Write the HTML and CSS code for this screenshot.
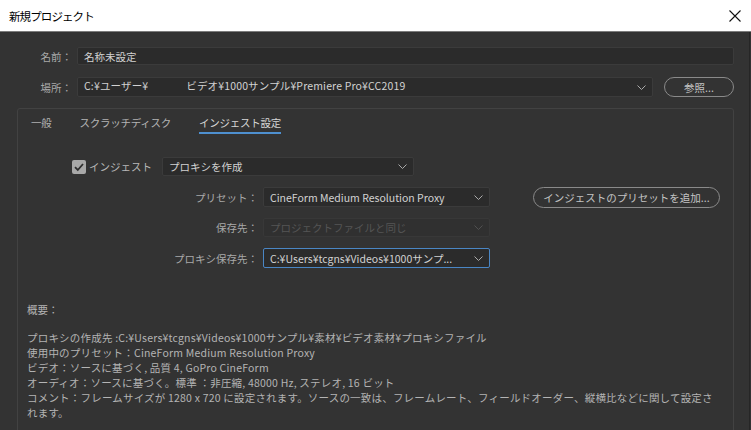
FILE: index.html
```html
<!DOCTYPE html>
<html lang="ja">
<head>
<meta charset="utf-8">
<title>新規プロジェクト</title>
<link rel="stylesheet" href="styles.css">
</head>
<body>
<div class="window">
  <div class="titlebar">
    <span class="title">新規プロジェクト</span>
    <svg class="close" width="12" height="12" viewBox="0 0 12 12"><path d="M0.5 0.5 L11.5 11.5 M11.5 0.5 L0.5 11.5" stroke="#111" stroke-width="1.1" fill="none"/></svg>
  </div>
  <div class="body">
    <div class="form-row row-name">
      <span class="label">名前：</span>
      <div class="field field-name">名称未設定</div>
    </div>
    <div class="form-row row-loc">
      <span class="label">場所：</span>
      <div class="field field-loc">
        <span class="val">C:¥ユーザー¥<span class="redact"></span>ビデオ¥1000サンプル¥Premiere Pro¥CC2019</span>
        <svg class="chev" width="9" height="5" viewBox="0 0 9 5"><path d="M0.5 0.5 L4.5 4.5 L8.5 0.5" stroke="#aaa" stroke-width="1" fill="none"/></svg>
      </div>
      <div class="pill btn-browse">参照...</div>
    </div>
    <div class="panel">
      <div class="tabs">
        <span class="tab">一般</span>
        <span class="tab">スクラッチディスク</span>
        <span class="tab active">インジェスト設定</span>
      </div>
      <div class="ingest-row">
        <span class="checkbox"><svg width="14" height="14" viewBox="0 0 14 14"><path d="M3 7.2 L5.8 10 L11 4" stroke="#2e2e2e" stroke-width="1.8" fill="none"/></svg></span>
        <span class="ingest-label">インジェスト</span>
        <div class="field field-ingest">
          <span class="val">プロキシを作成</span>
          <svg class="chev" width="9" height="5" viewBox="0 0 9 5"><path d="M0.5 0.5 L4.5 4.5 L8.5 0.5" stroke="#aaa" stroke-width="1" fill="none"/></svg>
        </div>
      </div>
      <div class="settings">
        <div class="set-row r1">
          <span class="set-label">プリセット：</span>
          <div class="field field-set">
            <span class="val">CineForm Medium Resolution Proxy</span>
            <svg class="chev" width="9" height="5" viewBox="0 0 9 5"><path d="M0.5 0.5 L4.5 4.5 L8.5 0.5" stroke="#aaa" stroke-width="1" fill="none"/></svg>
          </div>
          <div class="pill btn-add">インジェストのプリセットを追加...</div>
        </div>
        <div class="set-row r2">
          <span class="set-label">保存先：</span>
          <div class="field field-set disabled">
            <span class="val">プロジェクトファイルと同じ</span>
            <svg class="chev" width="9" height="5" viewBox="0 0 9 5"><path d="M0.5 0.5 L4.5 4.5 L8.5 0.5" stroke="#505050" stroke-width="1" fill="none"/></svg>
          </div>
        </div>
        <div class="set-row r3">
          <span class="set-label">プロキシ保存先：</span>
          <div class="field field-set focused">
            <span class="val">C:¥Users¥tcgns¥Videos¥1000サンプ...</span>
            <svg class="chev" width="9" height="5" viewBox="0 0 9 5"><path d="M0.5 0.5 L4.5 4.5 L8.5 0.5" stroke="#aaa" stroke-width="1" fill="none"/></svg>
          </div>
        </div>
      </div>
      <div class="summary">
        <p class="sum-title">概要：</p>
        <p class="sum-text">プロキシの作成先 :C:¥Users¥tcgns¥Videos¥1000サンプル¥素材¥ビデオ素材¥プロキシファイル<br>使用中のプリセット：CineForm Medium Resolution Proxy<br>ビデオ：ソースに基づく, 品質 4, GoPro CineForm<br>オーディオ：ソースに基づく。標準 ：非圧縮, 48000 Hz, ステレオ, 16 ビット<br>コメント：フレームサイズが 1280 x 720 に設定されます。ソースの一致は、フレームレート、フィールドオーダー、縦横比などに関して設定されます。</p>
      </div>
    </div>
  </div>
</div>
</body>
</html>
```
FILE: styles.css
```css
* { box-sizing: border-box; }
html, body { margin: 0; padding: 0; }
body {
  width: 751px;
  height: 430px;
  overflow: hidden;
  background: #333333;
  font-family: "Noto Sans CJK JP", "Noto Sans", sans-serif;
}
.window {
  width: 751px;
  height: 430px;
  display: flex;
  flex-direction: column;
}
.titlebar {
  height: 32px;
  flex: none;
  background: #ffffff;
  border-bottom: 1px solid #7c7c7c;
  display: flex;
  align-items: center;
  justify-content: space-between;
  padding: 0 10px 0 9px;
}
.title {
  font-size: 11.5px;
  color: #000;
  letter-spacing: -0.9px;
}
.close { display: block; }
.body {
  flex: 1;
  background: #333333;
  border-right: 1px solid #262626;
  width: 750px;
  padding-top: 15px;
  overflow: hidden;
}
.form-row {
  display: flex;
  align-items: center;
}
.row-name { height: 18px; }
.row-loc { height: 20px; margin-top: 12px; }
.label {
  width: 77px;
  padding-right: 5px;
  text-align: right;
  font-size: 10.5px;
  color: #a9a9a9;
  flex: none;
}
.field {
  background: #2b2b2b;
  border: 1px solid #3b3b3b;
  border-radius: 2px;
  color: #d2d2d2;
  font-size: 10.5px;
  display: flex;
  align-items: center;
  justify-content: space-between;
  padding: 0 6px 0 6px;
  height: 100%;
  white-space: nowrap;
}
.field-name { width: 657px; }
.field-loc { width: 576px; padding-right: 6px; }
.field-loc .val { letter-spacing: 0.15px; }
.redact {
  display: inline-block;
  width: 38px;
  height: 16px;
  vertical-align: middle;
  background: #2b2b2b;
}
.chev { flex: none; display: block; }
.pill {
  border: 1px solid #8a8a8a;
  border-radius: 11px;
  color: #c4c4c4;
  font-size: 10.5px;
  display: flex;
  align-items: center;
  justify-content: center;
  white-space: nowrap;
}
.btn-browse {
  width: 70px;
  height: 20px;
  margin-left: 11px;
}
.panel {
  margin: 11px 0 0 17px;
  width: 717px;
  height: 400px;
  border: 1px solid #424242;
  border-radius: 3px;
}
.tabs {
  display: flex;
  padding-left: 13px;
  gap: 28px;
}
.tab {
  font-size: 10.5px;
  color: #b4b4b4;
  padding-top: 7px;
  padding-bottom: 2px;
  line-height: 14px;
  letter-spacing: -0.25px;
  border-bottom: 2px solid transparent;
}
.tab.active {
  color: #d6d6d6;
  border-bottom-color: #4e90d0;
}
.ingest-row {
  display: flex;
  align-items: center;
  height: 19px;
  margin-top: 23px;
  padding-left: 54px;
}
.checkbox {
  width: 14px;
  height: 14px;
  background: #a8a8a8;
  border-radius: 2px;
  display: block;
  flex: none;
}
.checkbox svg { display: block; }
.ingest-label {
  font-size: 10.5px;
  color: #b8b8b8;
  margin-left: 3px;
  width: 73px;
}
.field-ingest { width: 252px; }
.settings {
  margin-top: 11px;
  display: flex;
  flex-direction: column;
}
.set-row {
  display: flex;
  align-items: center;
}
.r1 { height: 20px; }
.r2 { height: 19px; margin-top: 11px; }
.r3 { height: 20px; margin-top: 11px; }
.set-label {
  width: 245px;
  padding-right: 5px;
  text-align: right;
  font-size: 10.5px;
  color: #a9a9a9;
  flex: none;
}
.field-set { width: 227px; }
.field-set.disabled {
  color: #555555;
  border-color: #383838;
  background: #303030;
}
.field-set.focused { border-color: #4a86c4; }
.btn-add {
  width: 187px;
  height: 21px;
  margin-left: 43px;
}
.summary {
  padding-left: 9px;
  margin-top: 34px;
  font-size: 10.5px;
  color: #b4b4b4;
  line-height: 15px;
  width: 700px;
}
.summary p { margin: 0; }
.sum-text { margin-top: 13px !important; letter-spacing: 0.2px; }
```
